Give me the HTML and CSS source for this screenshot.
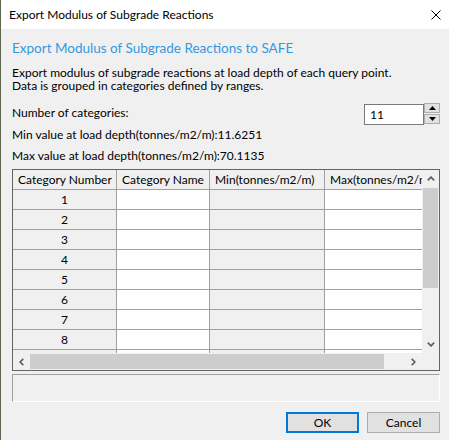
FILE: index.html
```html
<!DOCTYPE html>
<html>
<head>
<meta charset="utf-8">
<link rel="stylesheet" href="styles.css">
</head>
<body>
<div class="window">
  <div class="titlebar">
    <span class="title">Export Modulus of Subgrade Reactions</span>
    <svg class="close" width="10" height="10" viewBox="0 0 10 10"><path d="M0.5 0.5 L9.5 9.5 M9.5 0.5 L0.5 9.5" stroke="#000" stroke-width="1" fill="none"/></svg>
  </div>
  <div class="body">
    <h1 class="heading">Export Modulus of Subgrade Reactions to SAFE</h1>
    <p class="desc">Export modulus of subgrade reactions at load depth of each query point.<br>Data is grouped in categories defined by ranges.</p>
    <div class="count-row">
      <span class="count-label">Number of categories:</span>
      <div class="spinner">
        <div class="spin-input">11</div>
        <div class="spin-btns">
          <div class="spin-btn"><svg width="7" height="4" viewBox="0 0 7 4"><path d="M3.5 0 L7 4 L0 4 Z" fill="#000"/></svg></div>
          <div class="spin-btn"><svg width="7" height="4" viewBox="0 0 7 4"><path d="M0 0 L7 0 L3.5 4 Z" fill="#000"/></svg></div>
        </div>
      </div>
    </div>
    <div class="stat">Min value at load depth(tonnes/m2/m):11.6251</div>
    <div class="stat">Max value at load depth(tonnes/m2/m):70.1135</div>
    <div class="grid">
      <div class="viewport">
        <div class="row head">
          <div class="cell">Category Number</div>
          <div class="cell">Category Name</div>
          <div class="cell">Min(tonnes/m2/m)</div>
          <div class="cell">Max(tonnes/m2/m)</div>
        </div>
        <div class="row"><div class="cell num">1</div><div class="cell"></div><div class="cell ro"></div><div class="cell"></div></div>
        <div class="row"><div class="cell num">2</div><div class="cell"></div><div class="cell ro"></div><div class="cell"></div></div>
        <div class="row"><div class="cell num">3</div><div class="cell"></div><div class="cell ro"></div><div class="cell"></div></div>
        <div class="row"><div class="cell num">4</div><div class="cell"></div><div class="cell ro"></div><div class="cell"></div></div>
        <div class="row"><div class="cell num">5</div><div class="cell"></div><div class="cell ro"></div><div class="cell"></div></div>
        <div class="row"><div class="cell num">6</div><div class="cell"></div><div class="cell ro"></div><div class="cell"></div></div>
        <div class="row"><div class="cell num">7</div><div class="cell"></div><div class="cell ro"></div><div class="cell"></div></div>
        <div class="row"><div class="cell num">8</div><div class="cell"></div><div class="cell ro"></div><div class="cell"></div></div>
        <div class="row"><div class="cell num"></div><div class="cell"></div><div class="cell ro"></div><div class="cell"></div></div>
      </div>
      <div class="vscroll">
        <div class="sb-btn"><svg width="8" height="5" viewBox="0 0 8 5"><path d="M0.8 4.3 L4 1.1 L7.2 4.3" stroke="#606060" stroke-width="1.7" fill="none"/></svg></div>
        <div class="vtrack"><div class="vthumb"></div></div>
        <div class="sb-btn"><svg width="8" height="5" viewBox="0 0 8 5"><path d="M0.8 0.7 L4 3.9 L7.2 0.7" stroke="#606060" stroke-width="1.7" fill="none"/></svg></div>
      </div>
      <div class="hscroll">
        <div class="sb-btn"><svg width="5" height="8" viewBox="0 0 5 8"><path d="M4.3 0.8 L1.1 4 L4.3 7.2" stroke="#606060" stroke-width="1.7" fill="none"/></svg></div>
        <div class="htrack"><div class="hthumb"></div></div>
        <div class="sb-btn"><svg width="5" height="8" viewBox="0 0 5 8"><path d="M0.7 0.8 L3.9 4 L0.7 7.2" stroke="#606060" stroke-width="1.7" fill="none"/></svg></div>
      </div>
      <div class="corner"></div>
    </div>
    <div class="status"></div>
    <div class="buttons">
      <div class="btn default">OK</div>
      <div class="btn">Cancel</div>
    </div>
  </div>
</div>
</body>
</html>
```

FILE: styles.css
```css
html, body {
  margin: 0;
  padding: 0;
}
body {
  width: 449px;
  height: 440px;
  overflow: hidden;
  background: #f0f0f0;
  font-family: "Lato", "Liberation Sans", sans-serif;
  font-size: 12px;
  color: #000;
}
.window {
  height: 440px;
  box-sizing: border-box;
  border-left: 1px solid #5e6650;
}
.titlebar {
  height: 29px;
  background: #fff;
  display: flex;
  align-items: center;
  justify-content: space-between;
  padding: 0 8px 0 8px;
}
.title {
  font-size: 12px;
  line-height: 16px;
}
.close {
  display: block;
}
.body {
  padding: 10px 9px 0 11px;
}
.heading {
  margin: 0;
  font-size: 13.5px;
  font-weight: normal;
  line-height: 18px;
  color: #3399e0;
}
.desc {
  margin: 9px 0 0;
  line-height: 13px;
}
.count-row {
  display: flex;
  justify-content: space-between;
  align-items: flex-start;
  margin-top: 11px;
  height: 21px;
}
.count-label {
  line-height: 15px;
  padding-top: 2px;
}
.spinner {
  display: flex;
}
.spin-input {
  width: 60px;
  height: 21px;
  margin-top: 1px;
  box-sizing: border-box;
  border: 1px solid #7a7a7a;
  background: #fff;
  padding-left: 5px;
  line-height: 19px;
}
.spin-btns {
  display: flex;
  flex-direction: column;
  gap: 1px;
  width: 16px;
}
.spin-btn {
  height: 10px;
  box-sizing: border-box;
  border: 1px solid #adadad;
  background: #e1e1e1;
  display: flex;
  align-items: center;
  justify-content: center;
}
.spin-btn svg {
  display: block;
}
.stat {
  height: 21px;
  line-height: 21px;
}
.grid {
  margin-top: 3px;
  width: 428px;
  box-sizing: border-box;
  border: 1px solid #646464;
  display: grid;
  grid-template-columns: 409px 17px;
  grid-template-rows: 183px 17px;
}
.viewport {
  overflow: hidden;
  background: #fff;
}
.row {
  display: grid;
  grid-template-columns: 104px 93px 115px 121px;
  height: 20px;
  width: 433px;
}
.cell {
  box-sizing: border-box;
  border-right: 1px solid #a0a0a0;
  border-bottom: 1px solid #a0a0a0;
  background: #fff;
  line-height: 19px;
  white-space: nowrap;
  overflow: hidden;
}
.head .cell {
  background: #f0f0f0;
  padding-left: 5px;
}
.cell.num {
  background: #f0f0f0;
  text-align: center;
}
.cell.ro {
  background: #f0f0f0;
}
.vscroll {
  background: #f0f0f0;
  display: flex;
  flex-direction: column;
}
.sb-btn {
  width: 17px;
  height: 17px;
  flex: none;
  display: flex;
  align-items: center;
  justify-content: center;
}
.sb-btn svg {
  display: block;
}
.vtrack {
  flex: 1;
  padding: 1px 1px 0;
}
.vthumb {
  height: 100px;
  background: #cdcdcd;
}
.hscroll {
  background: #f0f0f0;
  display: flex;
}
.htrack {
  flex: 1;
  padding: 1px 0;
}
.hthumb {
  width: 354px;
  height: 15px;
  background: #cdcdcd;
}
.corner {
  background: #f0f0f0;
}
.status {
  margin-top: 3px;
  width: 428px;
  height: 28px;
  box-sizing: border-box;
  border-top: 1px solid #a0a0a0;
  border-left: 1px solid #a0a0a0;
  border-right: 1px solid #fff;
  border-bottom: 1px solid #fff;
}
.buttons {
  display: flex;
  justify-content: flex-end;
  gap: 8px;
  margin-top: 10px;
}
.btn {
  width: 73px;
  height: 21px;
  box-sizing: border-box;
  border: 1px solid #adadad;
  background: #e1e1e1;
  text-align: center;
  line-height: 19px;
}
.btn.default {
  border: 2px solid #0078d7;
  line-height: 17px;
}
```
